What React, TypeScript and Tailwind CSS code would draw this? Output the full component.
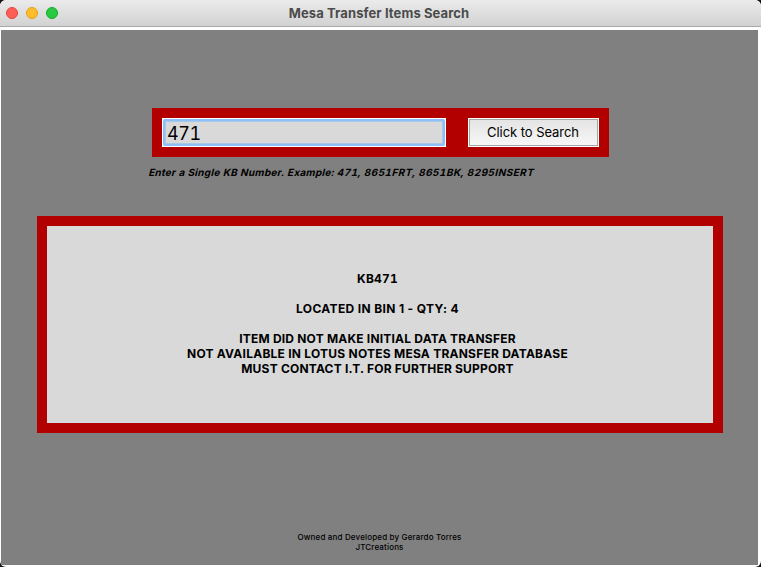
const trafficLights = [
  { name: 'close', style: 'bg-[#ff5f57] border-[#e2463f]' },
  { name: 'minimize', style: 'bg-[#ffbd2e] border-[#e1a116]' },
  { name: 'zoom', style: 'bg-[#28c940] border-[#12ac28]' },
];

function TitleBar() {
  return (
    <header className="relative flex h-[27px] items-center border-b border-[#a9a9a9] bg-linear-to-b from-[#ebebeb] to-[#d2d2d2] pl-1.5">
      <div className="flex gap-2">
        {trafficLights.map((light) => (
          <span key={light.name} className={`size-3 rounded-full border ${light.style}`} />
        ))}
      </div>
      <h1 className="absolute inset-x-0 top-[5px] pr-[3px] text-center text-[13px] leading-4 font-bold tracking-[0.1px] text-[#4b4b4b]">
        Mesa Transfer Items Search
      </h1>
    </header>
  );
}

function SearchBar() {
  return (
    <div className="ml-[151px] flex h-[49px] w-[457px] justify-between bg-[#b20000] p-2.5">
      <div className="w-[284px] bg-white p-px">
        <div className="h-full rounded-[2px] border-2 border-[#8dc0f8] bg-[#d9d9d9]">
          <input
            defaultValue="471"
            className="block h-full w-full border border-[#a8c8ea] bg-transparent pt-px pl-px text-[18px] leading-none tracking-[-0.4px] text-black tabular-nums outline-none"
          />
        </div>
      </div>
      <button className="w-[131px] bg-white p-px">
        <span className="flex h-full items-center justify-center border border-[#a6a6a6] bg-linear-to-b from-[#e4e4e4] to-[#f7f7f7] pb-0.5 pr-px text-[13px] leading-4 tracking-[-0.05px] text-black">
          Click to Search
        </span>
      </button>
    </div>
  );
}

function Results() {
  return (
    <section className="ml-9 h-[217px] w-[686px] border-10 border-[#b20000] bg-[#d9d9d9] pt-[45px] pr-[5px] text-center text-[12px] leading-[15px] font-bold tracking-[0.2px] whitespace-nowrap text-black">
      <p className="tabular-nums">KB471</p>
      <p className="mt-[15px] tracking-[0.35px]">LOCATED IN BIN 1 - QTY: 4</p>
      <p className="mt-[15px]">ITEM DID NOT MAKE INITIAL DATA TRANSFER</p>
      <p className="tracking-[0.24px]">NOT AVAILABLE IN LOTUS NOTES MESA TRANSFER DATABASE</p>
      <p>MUST CONTACT I.T. FOR FURTHER SUPPORT</p>
    </section>
  );
}

export default function App() {
  return (
    <div className="h-[567px] w-[761px] bg-[#151515] font-['Inter','Liberation_Sans',sans-serif]">
      <div className="flex h-full flex-col overflow-hidden rounded-[6px] bg-white">
        <TitleBar />
        <main className="mt-[3px] ml-px h-[535px] w-[757px] bg-[#808080] pt-[78px]">
          <SearchBar />
          <p className="mt-2 ml-[148px] w-max -skew-x-[14deg] text-[10px] leading-[15px] font-bold whitespace-nowrap text-black tabular-nums">
            <span className="tracking-[0.29px]">Enter a Single KB Number. Example: </span>
            <span className="tracking-[0.45px]">471, 8651FRT, 8651BK, 8295INSERT</span>
          </p>
          <div className="h-9" />
          <Results />
          <footer className="mt-[99px] text-center text-[8px] leading-[10px] font-medium tracking-[0.16px] text-black">
            <p>Owned and Developed by Gerardo Torres</p>
            <p>JTCreations</p>
          </footer>
        </main>
      </div>
    </div>
  );
}
